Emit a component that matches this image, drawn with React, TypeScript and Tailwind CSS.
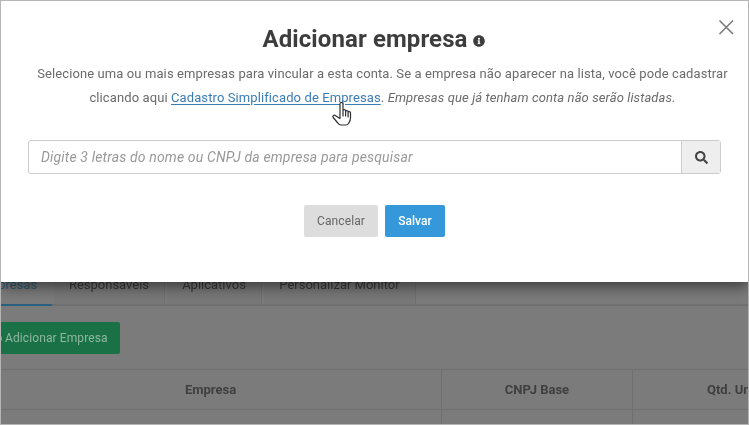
import { FaInfoCircle, FaSearch, FaPlusCircle } from 'react-icons/fa'

function HandCursor() {
  return (
    <svg
      className="absolute left-[331px] top-[101px]"
      width="20"
      height="24"
      viewBox="0 0 20 24"
      fill="#ffffff"
      stroke="#2f2f2f"
      strokeWidth="1.2"
      strokeLinejoin="round"
      strokeLinecap="round"
    >
      <path d="M8 2c0-2 3-2 3 0v6.5c0-1.3 2.6-1.3 2.6 0v1c0-1.2 2.5-1.2 2.5 0v1c0-1.2 2.4-1.2 2.4.3v5.2c0 2.6-1 4-2 5.5-.6.9-1.5 1.5-2.5 1.5H9c-1.4 0-2.4-.8-3.2-2L1.2 15.5c-1-1.6 1-3 2.4-1.8L8 16.5z" />
      <path d="M11 9v5M13.6 10v4M16.1 11v4" fill="none" />
    </svg>
  )
}

function PageBehind() {
  const tabs = [
    { label: 'Responsáveis', width: 'w-[111px]' },
    { label: 'Aplicativos', width: 'w-[95px]' },
    { label: 'Personalizar Monitor', width: 'w-[152px]' },
  ]

  return (
    <div className="flex h-full flex-col bg-[#7b7b7b] pt-[263px] text-[13px] text-[#3f3f3f] blur-[0.4px]">
      <div className="flex h-[42px] shrink-0 border-b-2 border-[#707070]">
        <div className="-mb-[2px] flex w-[51px] shrink-0 items-center justify-end overflow-hidden whitespace-nowrap border-b-2 border-[#2a6080] pr-[15px] pt-[2px] text-[#2c5a75]">
          Empresas
        </div>
        <div className="flex gap-[2px] pl-[2px]">
          {tabs.map((tab) => (
            <div
              key={tab.label}
              className={`${tab.width} flex items-center justify-center border-r border-[#707070] bg-[#787878] pt-[2px] text-[#383838]`}
            >
              {tab.label}
            </div>
          ))}
        </div>
      </div>

      <div className="flex items-center pt-[16px]">
        <button className="-ml-[12px] flex h-[32px] w-[131px] items-center gap-[3px] rounded-[2px] bg-[#1a7145] pl-[2px] text-[12px] tracking-[0.1px] text-[#8fb7a2]">
          <FaPlusCircle className="size-[11px]" />
          <span>Adicionar Empresa</span>
        </button>
      </div>

      <div className="mt-[15px] grid h-[41px] shrink-0 grid-cols-[440px_191px_1fr] border-y border-[#6f6f6f] font-bold text-[#3f3f3f]">
        <div className="flex items-center justify-center pr-[21px]">Empresa</div>
        <div className="flex items-center justify-center border-l border-[#6f6f6f]">CNPJ Base</div>
        <div className="flex items-center overflow-hidden whitespace-nowrap border-l border-[#6f6f6f] pl-[74px]">
          Qtd. Unidades
        </div>
      </div>
      <div className="grid flex-1 grid-cols-[440px_191px_1fr]">
        <div />
        <div className="border-l border-[#6f6f6f]" />
        <div className="border-l border-[#6f6f6f]" />
      </div>
    </div>
  )
}

function AddCompanyModal() {
  return (
    <div className="absolute inset-x-0 top-0 flex h-[281px] flex-col bg-white px-[27px] shadow-[0_4px_14px_rgba(0,0,0,0.55)]">
      <button className="absolute right-[13px] top-[17px] text-[#777777]">
        <svg width="18" height="18" viewBox="0 0 18 18" fill="none" stroke="currentColor" strokeWidth="1.5">
          <path d="M2.5 2.5l13.5 13.5M16 2.5L2.5 16" />
        </svg>
      </button>

      <h2 className="mt-[22px] flex h-[32px] items-center justify-center pr-[2px] text-[24px] font-bold leading-[32px] tracking-[0.1px] text-[#3d3d3d]">
        Adicionar empresa
        <FaInfoCircle className="ml-[5px] mt-[4px] size-[12px]" />
      </h2>

      <p className="-mr-[10px] ml-[6px] mt-[7px] text-center text-[13px] leading-[24px] tracking-[0.1px] text-[#6b6b6b]">
        Selecione uma ou mais empresas para vincular a esta conta. Se a empresa não aparecer na lista, você pode cadastrar
        <br />
        clicando aqui{' '}
        <a className="text-[#3a7cb5] underline underline-offset-[2px]">Cadastro Simplificado de Empresas</a>.{' '}
        <em>Empresas que já tenham conta não serão listadas.</em>
      </p>

      <div className="mt-[30px] flex h-[34px] shrink-0 rounded-[3px] border border-[#cccccc]">
        <div className="flex flex-1 items-center pl-[12px] text-[14px] italic tracking-[0.16px] text-[#999999]">
          Digite 3 letras do nome ou CNPJ da empresa para pesquisar
        </div>
        <div className="flex w-[39px] items-center justify-center border-l border-[#cccccc] bg-[#eeeeee] text-[#444444]">
          <FaSearch className="size-[13px]" />
        </div>
      </div>

      <div className="mt-[31px] flex justify-center gap-[7px] text-[12px]">
        <button className="h-[32px] w-[74px] rounded-[2px] bg-[#dddddd] tracking-[0.1px] text-[#666666]">Cancelar</button>
        <button className="h-[32px] w-[60px] rounded-[2px] bg-[#3498db] font-medium text-white">Salvar</button>
      </div>
    </div>
  )
}

export default function App() {
  return (
    <div className="h-[425px] w-[749px] overflow-hidden border border-[#b5b5b5] font-['Roboto',sans-serif]">
      <div className="relative h-full overflow-hidden">
        <PageBehind />
        <AddCompanyModal />
        <HandCursor />
      </div>
    </div>
  )
}
